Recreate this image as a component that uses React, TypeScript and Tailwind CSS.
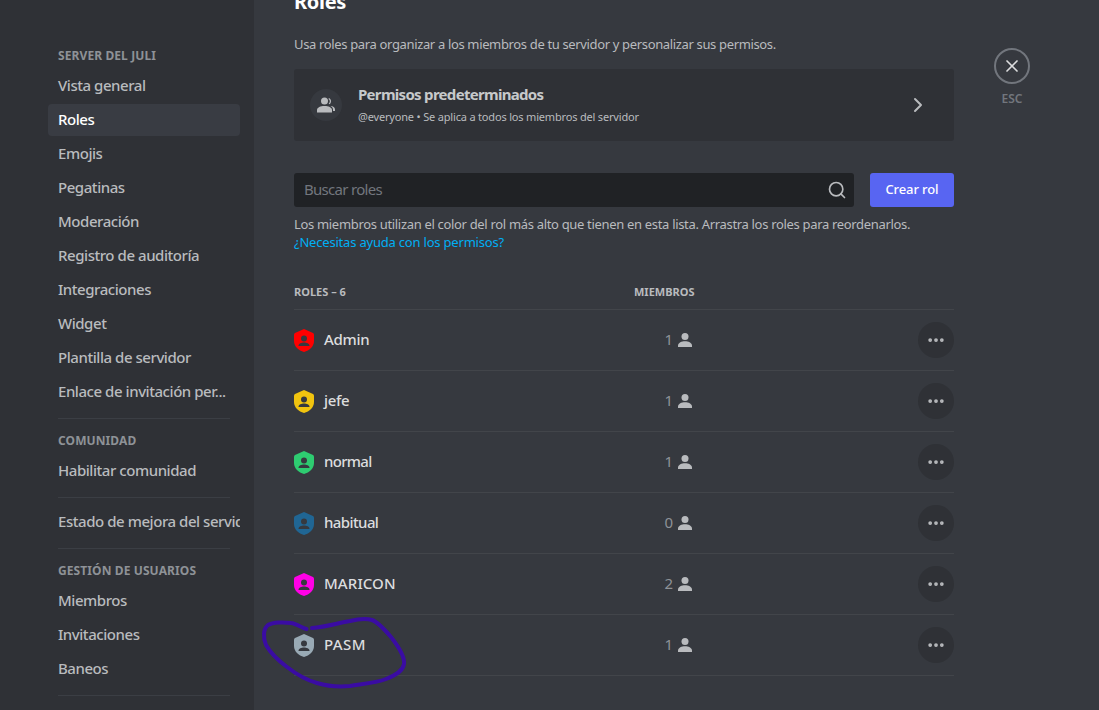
import React from "react";
import { X, ChevronRight, Search, Ellipsis } from "lucide-react";

type SidebarEntry = { label: string; active?: boolean };

const roles = [
  { name: "Admin", color: "#ff0000", count: 1, spacing: "tracking-[-0.3px]" },
  { name: "jefe", color: "#f1c40f", count: 1, spacing: "tracking-[-0.3px]" },
  { name: "normal", color: "#2ecc71", count: 1, spacing: "tracking-[-0.7px]" },
  { name: "habitual", color: "#206694", count: 0, spacing: "tracking-[-0.6px]" },
  { name: "MARICON", color: "#ff00e6", count: 2, spacing: "tracking-[0.1px]" },
  { name: "PASM", color: "#99aab5", count: 1, spacing: "tracking-[0.4px]" },
];

function NavItem({ label, active }: SidebarEntry) {
  return (
    <div
      className={`mb-[2px] h-[32px] rounded-[4px] pl-[10px] text-[15px] leading-[30px] tracking-[-0.45px] whitespace-nowrap overflow-hidden font-medium ${
        active ? "bg-[#393c43] text-white" : "text-[#b9bbbe]"
      }`}
    >
      {label}
    </div>
  );
}

function NavHeader({ label }: { label: string }) {
  return (
    <div className="px-[10px] pb-[6px] text-[12px] leading-[16px] tracking-[0.1px] font-bold uppercase text-[#8e9297]">
      {label}
    </div>
  );
}

function NavDivider() {
  return <div className="mx-[10px] mt-[10px] mb-[8px] h-px bg-[#3b3e44]" />;
}

function ShieldIcon({ color }: { color: string }) {
  return (
    <svg width="20" height="23" viewBox="0 0 20 23" className="shrink-0">
      <path d="M10 0 L19 4 Q20 4.500 20 5.500 V12 C20 17.500 15.500 21.500 10 23 C4.500 21.500 0 17.500 0 12 V5.500 Q0 4.500 1 4 Z" fill={color} />
      <circle cx="10" cy="9.500" r="3" fill="#36393f" />
      <path d="M4.500 17 C4.500 14.600 7.500 13.600 10 13.600 C12.500 13.600 15.500 14.600 15.500 17 Z" fill="#36393f" />
    </svg>
  );
}

function PersonIcon() {
  return (
    <svg width="14" height="14" viewBox="0 0 14 14" className="shrink-0" fill="#b9bbbe">
      <circle cx="7" cy="3.500" r="3.500" />
      <path d="M0 14 V12.500 C0 9.800 3.800 8.300 7 8.300 C10.200 8.300 14 9.800 14 12.500 V14 Z" />
    </svg>
  );
}

function RoleRow({ name, color, count, spacing }: { name: string; color: string; count: number; spacing: string }) {
  return (
    <div className="flex h-[61px] items-center border-b border-[#42454a]">
      <div className="flex w-[340px] items-center gap-[10px]">
        <ShieldIcon color={color} />
        <span className={`pb-[2px] text-[15px] font-medium text-[#dcddde] ${spacing}`}>{name}</span>
      </div>
      <div className="flex w-[61px] items-center justify-end gap-[5px] pr-[3px] text-[15px] text-[#8e9297]">
        <span className="pb-[2px]">{count}</span>
        <PersonIcon />
      </div>
      <div className="flex-1" />
      <div className="flex h-[36px] w-[36px] items-center justify-center rounded-full bg-[#2f3136]">
        <Ellipsis size={20} strokeWidth={2.500} className="text-[#b9bbbe]" />
      </div>
    </div>
  );
}

export default function App() {
  return (
    <div
      className="relative flex h-[710px] w-[1099px] overflow-hidden bg-[#36393f]"
      style={{ fontFamily: '"Noto Sans", sans-serif' }}
    >
      {/* Sidebar */}
      <aside className="h-full w-[254px] shrink-0 overflow-hidden bg-[#2f3136] pt-[48px] pl-[48px] pr-[14px]">
        <NavHeader label="Server del Juli" />
        <NavItem label="Vista general" />
        <NavItem label="Roles" active />
        <NavItem label="Emojis" />
        <NavItem label="Pegatinas" />
        <NavItem label="Moderación" />
        <NavItem label="Registro de auditoría" />
        <NavItem label="Integraciones" />
        <NavItem label="Widget" />
        <NavItem label="Plantilla de servidor" />
        <NavItem label="Enlace de invitación per..." />
        <NavDivider />
        <div className="h-[6px]" />
        <NavHeader label="Comunidad" />
        <NavItem label="Habilitar comunidad" />
        <NavDivider />
        <NavItem label="Estado de mejora del servidor" />
        <NavDivider />
        <div className="h-[6px]" />
        <NavHeader label="Gestión de usuarios" />
        <NavItem label="Miembros" />
        <NavItem label="Invitaciones" />
        <NavItem label="Baneos" />
        <NavDivider />
      </aside>

      {/* Main */}
      <main className="flex flex-1 items-start pl-[40px]">
        <div className="-mt-[11px] w-[660px] shrink-0">
          <h1 className="h-[26px] text-[20px] font-bold leading-[26px] tracking-[-0.3px] text-white">Roles</h1>
          <p className="mt-[19px] h-[20px] whitespace-nowrap text-[13px] leading-[20px] tracking-[-0.35px] text-[#b9bbbe]">
            Usa roles para organizar a los miembros de tu servidor y personalizar sus permisos.
          </p>
          <div className="mt-[15px] flex h-[72px] items-center rounded-[3px] bg-[#2f3136] pl-[16px] pr-[24px]">
            <div className="flex h-[32px] w-[32px] items-center justify-center rounded-full bg-[#36393f]">
              <svg width="18" height="16" viewBox="0 0 18 16" fill="#b9bbbe">
                <circle cx="7.500" cy="4" r="3.500" />
                <path d="M0 15.500 V13 C0 10.500 3.500 9 7.500 9 C11.500 9 15 10.500 15 13 V15.500 Z" />
                <path d="M12 1 C13.500 2 14 3 14 4.200 C14 5.400 13.500 6.400 12.400 7.300 L11.700 6.500 C12.500 5.800 12.800 5 12.800 4.200 C12.800 3.400 12.400 2.600 11.400 1.900 Z" />
                <path d="M16 14 V12.500 C16 11 15 9.700 13.500 9 C16 9 18 10.500 18 12.500 V14 Z" />
              </svg>
            </div>
            <div className="ml-[16px] mb-[2px] flex-1">
              <div className="text-[15px] font-bold leading-[20px] tracking-[-0.7px] text-[#c7c9cb]">Permisos predeterminados</div>
              <div className="mt-[5px] text-[11px] leading-[16px] tracking-[-0.18px] text-[#b9bbbe]">
                @everyone • Se aplica a todos los miembros del servidor
              </div>
            </div>
            <ChevronRight size={24} strokeWidth={2} className="text-[#b9bbbe]" />
          </div>

          <div className="mt-[32px] flex h-[34px] gap-[16px]">
            <div className="flex flex-1 items-center justify-between rounded-[3px] bg-[#202225] pl-[10px] pr-[7px]">
              <span className="-mt-px text-[15px] tracking-[-0.7px] text-[#72767d]">Buscar roles</span>
              <Search size={20} strokeWidth={2} className="text-[#b9bbbe]" />
            </div>
            <button className="flex w-[84px] items-center justify-center rounded-[3px] bg-[#5865f2] text-[13px] font-medium tracking-[-0.1px] text-white">
              Crear rol
            </button>
          </div>

          <p className="mt-[8px] whitespace-nowrap text-[13px] leading-[18px] tracking-[-0.32px] text-[#b9bbbe]">
            Los miembros utilizan el color del rol más alto que tienen en esta lista. Arrastra los roles para reordenarlos.
          </p>
          <a className="block text-[13px] leading-[18px] tracking-[-0.2px] text-[#00aff4]">¿Necesitas ayuda con los permisos?</a>

          <div className="mt-[24px] flex h-[35px] items-center border-b border-[#42454a] text-[11px] font-bold text-[#b9bbbe]">
            <span className="w-[340px]">ROLES – 6</span>
            <span>MIEMBROS</span>
          </div>
          {roles.map((role) => (
            <RoleRow key={role.name} {...role} />
          ))}
        </div>

        {/* Close button */}
        <div className="ml-[40px] mt-[48px] flex w-[36px] flex-col items-center">
          <div className="flex h-[36px] w-[36px] items-center justify-center rounded-full border-2 border-[#72767d]">
            <X size={20} strokeWidth={2} className="text-[#dcddde]" />
          </div>
          <span className="mt-[8px] text-[12px] font-semibold leading-[14px] text-[#72767d]">ESC</span>
        </div>
      </main>

      {/* Hand drawn circle over the last role */}
      <svg className="pointer-events-none absolute inset-0" width="1099" height="710" fill="none">
        <path
          d="M306.500 629 C302 628 296 623.500 291 623 C284 622 273 622 268 625 C263 629 263 638 266 645 C271 654 279 661 287 667 C296 674 306 680 317 683 C327 686 340 687 350 686 C362 684 376 683 386 679 C396 675 403 671 404 664 C405 657 398 646 391 637 C385 630 378 622 372 620 C366 618 358 619 350 621 C338 623 326 627 312 628"
          stroke="#3a0ca3"
          strokeWidth="4"
          strokeLinecap="round"
        />
      </svg>
    </div>
  );
}
